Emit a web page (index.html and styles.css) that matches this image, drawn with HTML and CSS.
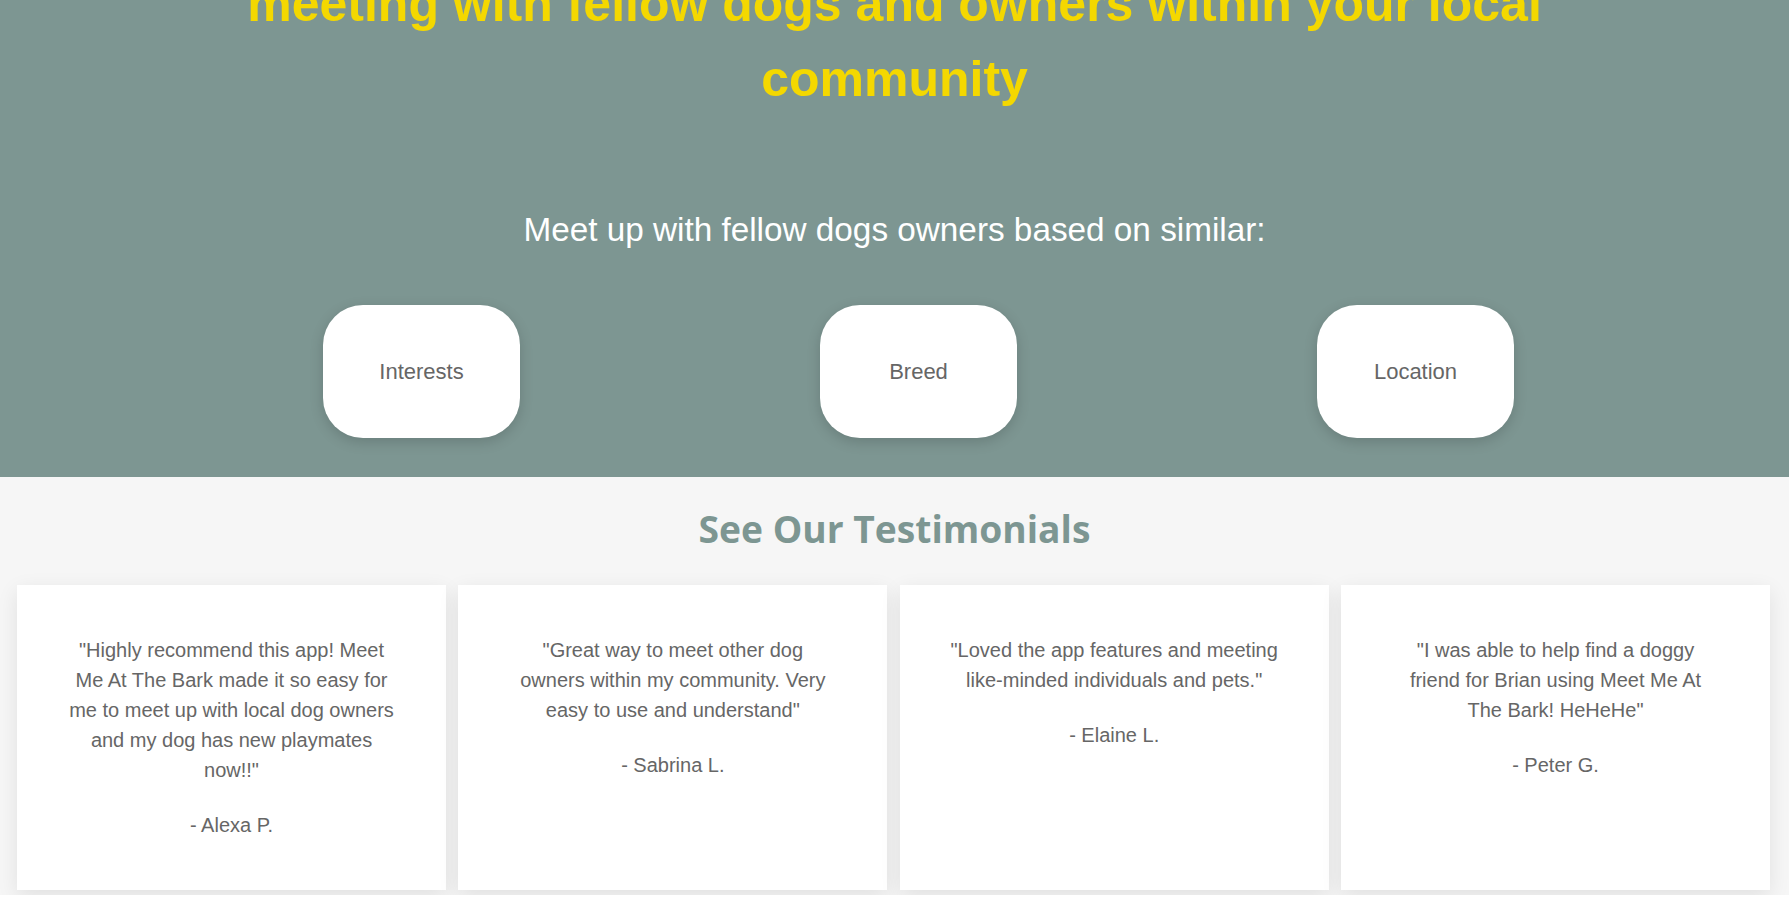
FILE: index.html
```html
<!DOCTYPE html>
<html lang="en">
<head>
<meta charset="utf-8">
<title>Meet Me At The Bark</title>
<link rel="stylesheet" href="styles.css">
</head>
<body>
<main class="page">
  <section class="hero">
    <h1 class="hero-title">meeting with fellow dogs and owners within your local community</h1>
    <p class="hero-sub">Meet up with fellow dogs owners based on similar:</p>
    <div class="pill-row">
      <div class="pill">Interests</div>
      <div class="pill">Breed</div>
      <div class="pill">Location</div>
    </div>
  </section>
  <section class="testimonials">
    <h2 class="testimonials-title">See Our Testimonials</h2>
    <div class="card-row">
      <article class="card">
        <p class="quote">"Highly recommend this app! Meet Me At The Bark made it so easy for me to meet up with local dog owners and my dog has new playmates now!!"</p>
        <p class="author">- Alexa P.</p>
      </article>
      <article class="card">
        <p class="quote">"Great way to meet other dog owners within my community. Very easy to use and understand"</p>
        <p class="author">- Sabrina L.</p>
      </article>
      <article class="card">
        <p class="quote">"Loved the app features and meeting like-minded individuals and pets."</p>
        <p class="author">- Elaine L.</p>
      </article>
      <article class="card">
        <p class="quote">"I was able to help find a doggy friend for Brian using Meet Me At The Bark! HeHeHe"</p>
        <p class="author">- Peter G.</p>
      </article>
    </div>
  </section>
</main>
</body>
</html>
```
FILE: styles.css
```css
html, body {
  margin: 0;
  padding: 0;
  background: #ffffff;
  font-family: "Liberation Sans", Arial, sans-serif;
  overflow: hidden;
}

.page {
  margin-right: 2px;
}

.hero {
  background: #7d9692;
  padding: 0 0 39px;
  overflow: hidden;
}

.hero-title {
  margin: -33px 0 0;
  padding: 0 150px;
  font-size: 50px;
  line-height: 75px;
  font-weight: 700;
  color: #f4d800;
  text-align: center;
}

.hero-sub {
  margin: 93px 0 55px;
  font-size: 33.3px;
  line-height: 40px;
  color: #ffffff;
  text-align: center;
}

.pill-row {
  display: grid;
  grid-template-columns: repeat(3, 1fr);
  justify-items: center;
  padding: 0 125px 0 173px;
}

.pill {
  width: 197px;
  height: 133px;
  border-radius: 40px;
  background: #ffffff;
  box-shadow: 0 4px 14px rgba(0, 0, 0, 0.16);
  display: flex;
  align-items: center;
  justify-content: center;
  font-size: 22px;
  color: #666666;
}

.testimonials {
  background: #f6f6f6;
  padding: 26px 0 5px;
}

.testimonials-title {
  margin: 0 0 30px;
  font-family: "Open Sans", "Noto Sans", sans-serif;
  font-weight: 700;
  font-size: 37.2px;
  line-height: 52px;
  color: #7d9692;
  text-align: center;
}

.card-row {
  display: flex;
  gap: 12.3px;
  padding: 0 19px 0 17px;
}

.card {
  flex: 1 1 0;
  background: #ffffff;
  padding: 50px 49.6px;
  box-shadow: 0 6px 20px rgba(0, 0, 0, 0.09);
  text-align: center;
  color: #666666;
  font-size: 20px;
  line-height: 30px;
}

.quote {
  margin: 0;
}

.author {
  margin: 25px 0 0;
}
```
